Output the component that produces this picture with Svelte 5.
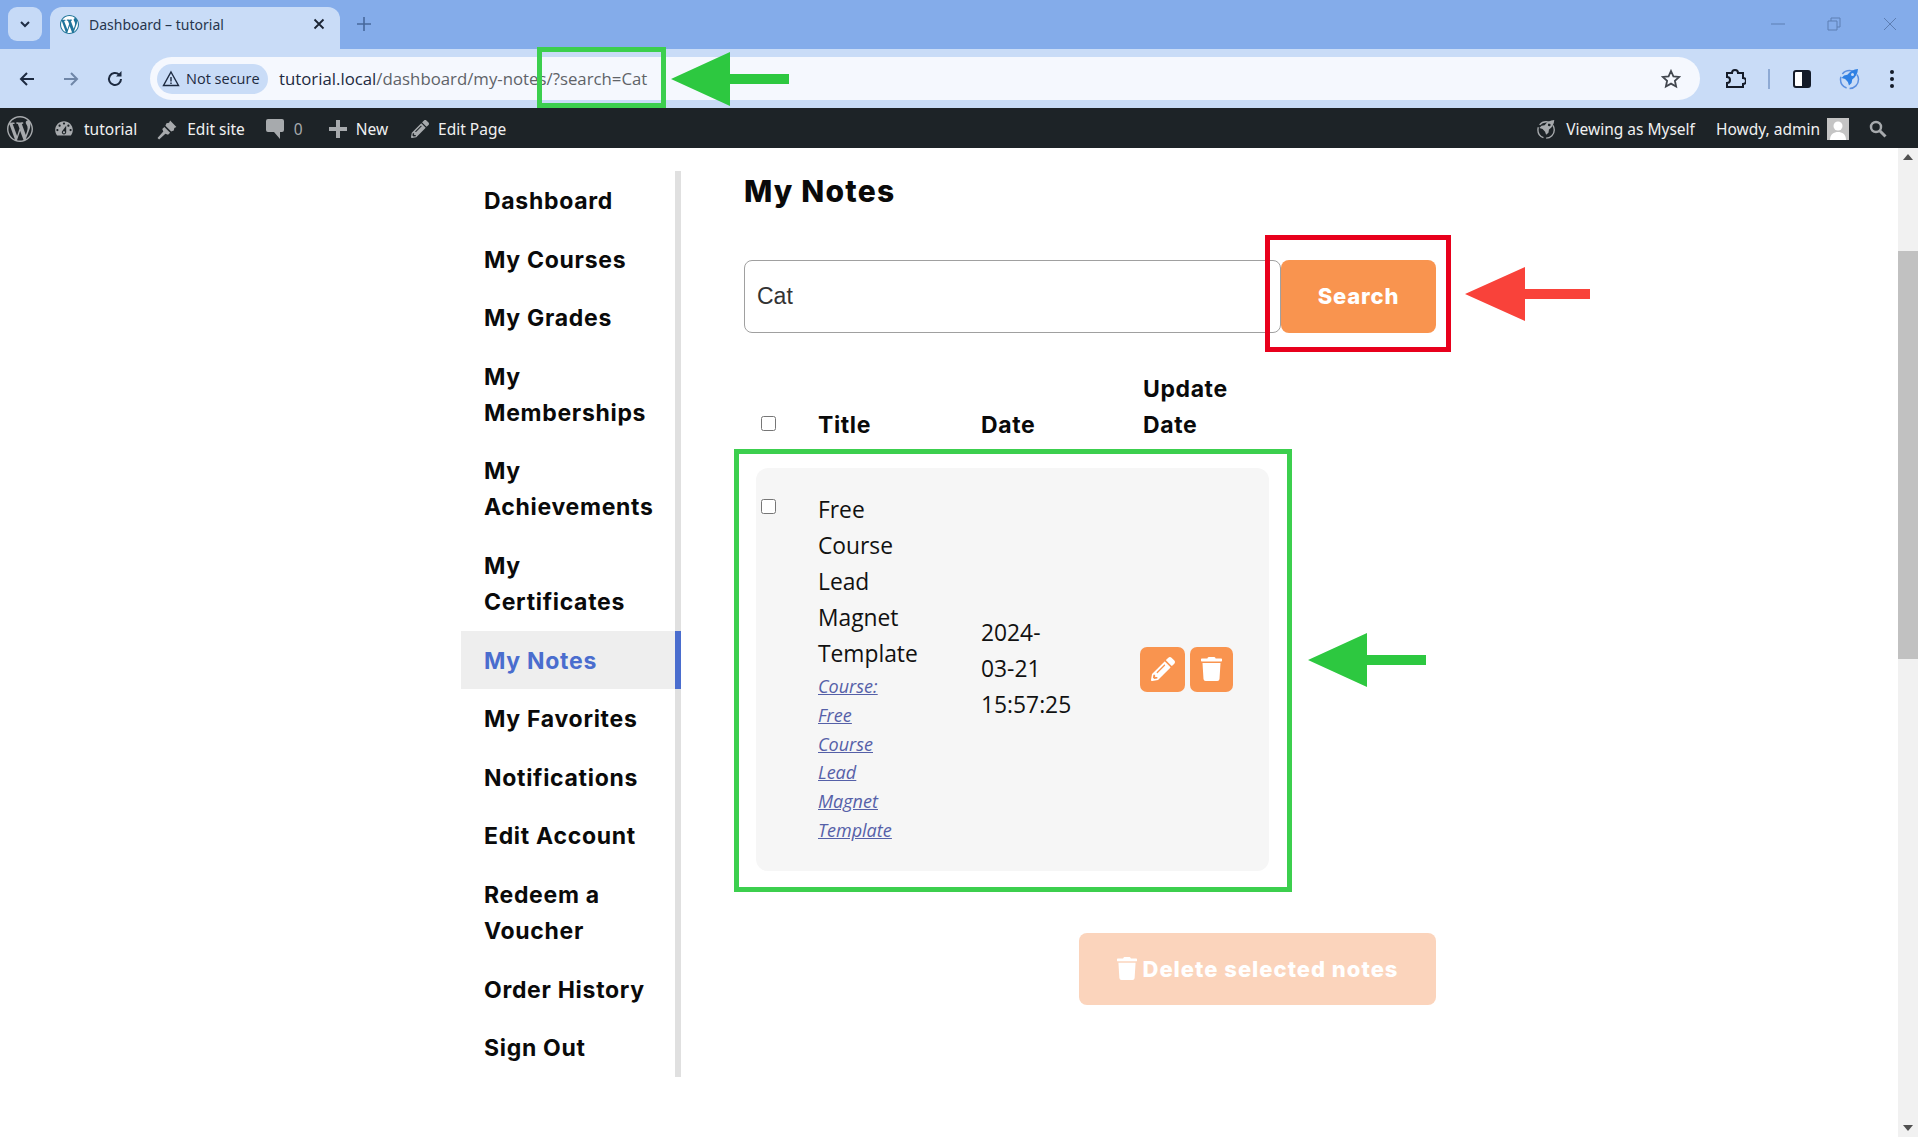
<script>
  const menu = [
    "Dashboard",
    "My Courses",
    "My Grades",
    "My Memberships",
    "My Achievements",
    "My Certificates",
    "My Notes",
    "My Favorites",
    "Notifications",
    "Edit Account",
    "Redeem a Voucher",
    "Order History",
    "Sign Out"
  ];
  const titleLines = ["Free", "Course", "Lead", "Magnet", "Template"];
  const courseLines = ["Course:", "Free", "Course", "Lead", "Magnet", "Template"];

  const trash = "M432 32H312l-9.4-18.7A24 24 0 0 0 281.1 0H166.8a23.72 23.72 0 0 0-21.4 13.3L136 32H16A16 16 0 0 0 0 48v32a16 16 0 0 0 16 16h416a16 16 0 0 0 16-16V48a16 16 0 0 0-16-16zM53.2 467a48 48 0 0 0 47.9 45h245.8a48 48 0 0 0 47.9-45L416 128H32z";
  const pencil = "M497.9 142.1l-46.1 46.1c-4.7 4.7-12.3 4.7-17 0l-111-111c-4.7-4.7-4.7-12.3 0-17l46.1-46.1c18.7-18.7 49.1-18.7 67.9 0l60.1 60.1c18.8 18.7 18.8 49.1 0 67.9zM284.2 99.8L21.6 362.4.4 483.9c-2.9 16.4 11.4 30.6 27.8 27.8l121.5-21.3 262.6-262.6c4.7-4.7 4.7-12.3 0-17l-111-111c-4.8-4.7-12.4-4.7-17.1 0zM124.1 339.9c-5.5-5.5-5.5-14.3 0-19.8l154-154c5.5-5.5 14.3-5.5 19.8 0s5.5 14.3 0 19.8l-154 154c-5.5 5.5-14.3 5.5-19.8 0zM88 424h48v36.3l-64.5 11.3-31.1-31.1L51.7 376H88v48z";
  const wp = "M20 10c0-5.51-4.49-10-10-10C4.48 0 0 4.49 0 10c0 5.52 4.48 10 10 10 5.51 0 10-4.48 10-10zM7.78 15.37L4.37 6.22c.55-.02 1.17-.08 1.17-.08.5-.06.44-1.13-.06-1.11 0 0-1.45.11-2.37.11-.18 0-.37 0-.58-.01C4.12 2.69 6.87 1.11 10 1.11c2.33 0 4.45.87 6.05 2.34-.68-.11-1.65.39-1.65 1.58 0 .74.45 1.36.9 2.1.35.61.55 1.36.55 2.46 0 1.49-1.4 5-1.4 5l-3.03-8.37c.54-.02.82-.17.82-.17.5-.05.44-1.25-.06-1.22 0 0-1.44.12-2.37.12-.87 0-2.33-.12-2.33-.12-.5-.03-.56 1.2-.06 1.22l.92.08 1.26 3.41zM17.41 10c.24-.64.74-1.87.43-4.25.7 1.29 1.05 2.71 1.05 4.25 0 3.29-1.73 6.24-4.4 7.78.97-2.59 1.94-5.2 2.92-7.78zM6.1 18.09C3.12 16.65 1.11 13.53 1.11 10c0-1.3.23-2.48.72-3.59C3.25 10.3 4.67 14.2 6.1 18.09zm4.03-6.63l2.58 6.98c-.86.29-1.76.45-2.71.45-.79 0-1.57-.11-2.29-.33.81-2.38 1.62-4.74 2.42-7.1z";
  const gauge = "M3.76 16h12.48c1.1-1.37 1.76-3.11 1.76-5 0-4.42-3.58-8-8-8s-8 3.58-8 8c0 1.89.66 3.63 1.76 5zM10 4c.55 0 1 .45 1 1s-.45 1-1 1-1-.45-1-1 .45-1 1-1zM6 6c.55 0 1 .45 1 1s-.45 1-1 1-1-.45-1-1 .45-1 1-1zm8 0c.55 0 1 .45 1 1s-.45 1-1 1-1-.45-1-1 .45-1 1-1zm-5.37 5.55L12 7v6c0 1.1-.9 2-2 2s-2-.9-2-2c0-.57.24-1.08.63-1.45zM4 10c.55 0 1 .45 1 1s-.45 1-1 1-1-.45-1-1 .45-1 1-1zm12 0c.55 0 1 .45 1 1s-.45 1-1 1-1-.45-1-1 .45-1 1-1zm-5 3c0-.55-.45-1-1-1s-1 .45-1 1 .45 1 1 1 1-.45 1-1z";
  const rocket = "M19 1c-4.5.3-8 2.2-10.6 5.8L5 7.4 2.6 10l3.5 1.1 2.8 2.8L10 17.4l2.6-2.4.6-3.4C16.800 9 18.700 5.500 19 1zM13.500 5a1.500 1.500 0 1 1 0 3 1.500 1.500 0 0 1 0-3z";
  const brush = "M12.500 1.500L18.500 7.500L16.500 8.500L16 11L13.500 12L8 6.500L9 4L11.500 3.500ZM7 7.500L12.500 13L10.500 15L8 14L2 19.500L.5 18L6 12L5 9.500Z";
</script>

<div class="window">
  <div class="tabstrip">
    <div class="tablist-btn">
      <svg width="14" height="14" viewBox="0 0 14 14"><path d="M3 5l4 4 4-4" fill="none" stroke="#1f2d45" stroke-width="2"/></svg>
    </div>
    <div class="tab">
      <svg class="favicon" width="19" height="19" viewBox="0 0 20 20"><circle cx="10" cy="10" r="10" fill="#fff"/><path d={wp} fill="#21759b"/></svg>
      <span class="tab-title">Dashboard – tutorial</span>
      <svg class="tab-close" width="12" height="12" viewBox="0 0 12 12"><path d="M1.500 1.500l9 9M10.500 1.500l-9 9" stroke="#1b2433" stroke-width="1.800"/></svg>
    </div>
    <svg class="newtab" width="14" height="14" viewBox="0 0 14 14"><path d="M7 0v14M0 7h14" stroke="#47689c" stroke-width="1.600"/></svg>
    <div class="winctl">
      <svg width="14" height="14" viewBox="0 0 14 14"><path d="M0 7h14" stroke="#5d7eb3" stroke-width="1"/></svg>
      <svg width="14" height="14" viewBox="0 0 14 14"><path d="M1 4h9v9H1zM4 4V1h9v9h-3" fill="none" stroke="#5d7eb3" stroke-width="1"/></svg>
      <svg width="14" height="14" viewBox="0 0 14 14"><path d="M1 1l12 12M13 1L1 13" stroke="#5d7eb3" stroke-width="1"/></svg>
    </div>
  </div>

  <div class="toolbar">
    <svg class="nav-icon" width="18" height="18" viewBox="0 0 18 18"><path d="M16 9H3M9 3L3 9l6 6" fill="none" stroke="#1d2a40" stroke-width="2"/></svg>
    <svg class="nav-icon" width="18" height="18" viewBox="0 0 18 18"><path d="M2 9h13M9 3l6 6-6 6" fill="none" stroke="#6f86a8" stroke-width="2"/></svg>
    <svg class="nav-icon" width="18" height="18" viewBox="0 0 18 18"><path d="M15 9a6 6 0 1 1-1.800-4.300" fill="none" stroke="#1d2a40" stroke-width="2"/><path d="M15.500 1v5.500H10z" fill="#1d2a40"/></svg>
    <div class="omnibox">
      <div class="chip">
        <svg width="18" height="17" viewBox="0 0 18 17"><path d="M9 2l7.500 13.500h-15zM9 7v4.500M9 12.500v1.500" fill="none" stroke="#1d2a40" stroke-width="1.400"/></svg>
        <span>Not secure</span>
      </div>
      <div class="url"><span class="host">tutorial.local</span>/dashboard/my-notes/?search=Cat</div>
      <svg class="star" width="20" height="20" viewBox="0 0 20 20"><path d="M10 2l2.400 5.300 5.800.6-4.300 3.900 1.200 5.700-5.100-2.900-5.100 2.900 1.200-5.700L1.800 7.900l5.800-.6z" fill="none" stroke="#42474f" stroke-width="1.800"/></svg>
    </div>
    <div class="tools">
      <svg width="22" height="22" viewBox="0 0 22 22"><path d="M3 5h5a3 3 0 0 1 6 0h5v5a3 3 0 0 1 0 6v3H3v-4a3 3 0 0 0 0-6z" fill="none" stroke="#141b28" stroke-width="2"/></svg>
      <span class="tool-sep"></span>
      <svg width="20" height="20" viewBox="0 0 20 20"><rect x="2" y="2" width="16" height="16" rx="2" fill="#fff" stroke="#141b28" stroke-width="2"/><rect x="10" y="2" width="8" height="16" fill="#141b28"/></svg>
      <svg class="tool-rocket" width="22" height="22" viewBox="0 0 22 22"><circle cx="10.500" cy="11.500" r="9" fill="none" stroke="#5b8fe0" stroke-width="1.500" stroke-dasharray="14 3"/><path d={rocket} fill="#2f80e4"/></svg>
      <svg class="tool-dots" width="6" height="20" viewBox="0 0 6 20"><circle cx="3" cy="3" r="2" fill="#141b28"/><circle cx="3" cy="10" r="2" fill="#141b28"/><circle cx="3" cy="17" r="2" fill="#141b28"/></svg>
    </div>
  </div>

  <div class="adminbar">
    <div class="ab-group">
      <svg class="ab-wp" width="26" height="26" viewBox="0 0 20 20"><path d={wp} fill="#a7aaad"/></svg>
      <div class="ab-item"><svg width="22" height="22" viewBox="0 0 20 20"><path d={gauge} fill="#a7aaad"/></svg>tutorial</div>
      <div class="ab-item"><svg width="21" height="21" viewBox="0 0 20 20"><path d={brush} fill="#a7aaad"/></svg>Edit site</div>
      <div class="ab-item"><svg width="20" height="22" viewBox="0 0 20 22"><path d="M3 1h14a2 2 0 0 1 2 2v9a2 2 0 0 1-2 2h-2v7l-6-7H3a2 2 0 0 1-2-2V3a2 2 0 0 1 2-2z" fill="#a7aaad"/></svg><span class="dim">0</span></div>
      <div class="ab-item ab-new"><svg width="18" height="18" viewBox="0 0 18 18"><path d="M7 0h4v7h7v4h-7v7H7v-7H0V7h7z" fill="#a7aaad"/></svg>New</div>
      <div class="ab-item ab-editpage"><svg width="18" height="18" viewBox="0 0 512 512"><path d={pencil} fill="#a7aaad"/></svg>Edit Page</div>
    </div>
    <div class="ab-group ab-right">
      <div class="ab-item"><svg width="20" height="20" viewBox="0 0 22 22"><circle cx="10" cy="12" r="9" fill="none" stroke="#a7aaad" stroke-width="1.500" stroke-dasharray="14 3"/><path d={rocket} fill="#a7aaad"/></svg>Viewing as Myself</div>
      <div class="ab-item">Howdy, admin
        <span class="avatar"><svg width="22" height="22" viewBox="0 0 22 22"><rect width="22" height="22" fill="#c4c4c4"/><circle cx="11" cy="8" r="4.500" fill="#fff"/><path d="M3 22c0-6 4-8 8-8s8 2 8 8z" fill="#fff"/></svg></span>
      </div>
      <svg class="ab-search" width="18" height="18" viewBox="0 0 18 18"><circle cx="7" cy="7" r="5" fill="none" stroke="#a7aaad" stroke-width="2.500"/><path d="M11 11l5.500 5.500" stroke="#a7aaad" stroke-width="3"/></svg>
    </div>
  </div>

  <div class="viewport">
    <div class="page">
      <nav class="sidebar">
        {#each menu as item}
          <div class="menu-item" class:active={item === "My Notes"}>{item}</div>
        {/each}
      </nav>

      <main class="content">
        <h1>My Notes</h1>
        <div class="searchrow">
          <div class="searchbox">Cat</div>
          <div class="searchbtn">Search</div>
        </div>

        <table class="notes">
          <thead>
            <tr>
              <th class="col-check"><input type="checkbox" /></th>
              <th class="col-title">Title</th>
              <th class="col-date">Date</th>
              <th class="col-update">Update Date</th>
            </tr>
          </thead>
          <tbody>
            <tr>
              <td class="cell-check"><input type="checkbox" /></td>
              <td class="cell-title">
                {#each titleLines as line}<div>{line}</div>{/each}
                <a href="#top">{#each courseLines as line}<span>{line}</span>{/each}</a>
              </td>
              <td class="cell-date">2024-<br />03-21<br />15:57:25</td>
              <td class="cell-actions">
                <div class="actions">
                  <span class="act act-edit"><svg width="24" height="24" viewBox="0 0 512 512"><path d={pencil} fill="#fff"/></svg></span>
                  <span class="act act-del"><svg width="21" height="24" viewBox="0 0 448 512"><path d={trash} fill="#fff"/></svg></span>
                </div>
              </td>
            </tr>
          </tbody>
        </table>

        <div class="bulk">
          <div class="bulkbtn">
            <svg width="20" height="23" viewBox="0 0 448 512"><path d={trash} fill="#fff"/></svg>
            Delete selected notes
          </div>
        </div>
      </main>
    </div>

    <div class="scrollbar">
      <svg class="sb-arrow" width="20" height="18" viewBox="0 0 20 18"><path d="M10 6l5 6H5z" fill="#505050"/></svg>
      <div class="sb-track"><div class="sb-thumb"></div></div>
      <svg class="sb-arrow" width="20" height="18" viewBox="0 0 20 18"><path d="M10 12l5-6H5z" fill="#505050"/></svg>
    </div>
  </div>

  <!-- annotations drawn on top of the screenshot -->
  <div class="mark mark-url"></div>
  <div class="mark mark-search"></div>
  <div class="mark mark-row"></div>
  <svg class="arrow arrow-url" width="118" height="54" viewBox="0 0 118 54"><path d="M0 27L59 0v22h59v10H59v22z" fill="#2dc840"/></svg>
  <svg class="arrow arrow-search" width="125" height="54" viewBox="0 0 125 54"><path d="M0 27L60 0v22h65v10H60v22z" fill="#f9423a"/></svg>
  <svg class="arrow arrow-row" width="118" height="54" viewBox="0 0 118 54"><path d="M0 27L59 0v22h59v10H59v22z" fill="#2dc840"/></svg>
</div>

<style>
  :global(body) {
    margin: 0;
    background: #fff;
    overflow: hidden;
  }

  .window {
    position: relative;
    width: 1918px;
    height: 1137px;
    display: flex;
    flex-direction: column;
    overflow: hidden;
    font-family: "Open Sans", "Liberation Sans", sans-serif;
    color: #111;
  }

  /* browser chrome */
  .tabstrip {
    height: 49px;
    flex: none;
    background: #84acea;
    display: flex;
    align-items: flex-end;
    padding-left: 8px;
    position: relative;
  }
  .tablist-btn {
    width: 34px;
    height: 34px;
    margin-bottom: 8px;
    border-radius: 9px;
    background: #c6daf7;
    display: flex;
    align-items: center;
    justify-content: center;
  }
  .tab {
    width: 290px;
    height: 42px;
    margin-left: 8px;
    box-sizing: border-box;
    padding: 0 15px 8px 10px;
    background: #c9dcf7;
    border-radius: 12px 12px 0 0;
    display: flex;
    align-items: center;
    font-size: 14px;
    font-family: "Noto Sans", sans-serif;
    color: #27364d;
  }
  .tab-title {
    margin-left: 10px;
    flex: 1;
  }
  .newtab {
    margin: 0 0 18px 17px;
  }
  .winctl {
    margin-left: auto;
    align-self: flex-start;
    margin-top: 17px;
    display: flex;
    gap: 42px;
    padding-right: 21px;
  }
  .toolbar {
    height: 59px;
    flex: none;
    background: #c9dcf7;
    display: flex;
    align-items: center;
    padding-left: 18px;
  }
  .nav-icon {
    margin-right: 26px;
  }
  .omnibox {
    width: 1550px;
    height: 43px;
    box-sizing: border-box;
    padding: 0 19px 0 7px;
    background: #f5f8fe;
    border-radius: 22px;
    display: flex;
    align-items: center;
  }
  .chip {
    height: 30px;
    width: 111px;
    box-sizing: border-box;
    padding-left: 5px;
    gap: 6px;
    border-radius: 15px;
    background: #c9dcf7;
    display: flex;
    align-items: center;
    font-size: 14.5px;
    color: #1d2a40;
    white-space: nowrap;
  }
  .url {
    margin-left: 11px;
    font-size: 16.8px;
    color: #5f6368;
    flex: 1;
  }
  .host {
    color: #1d2a40;
  }
  .tools {
    display: flex;
    align-items: center;
    margin-left: 24px;
    gap: 22px;
  }
  .tool-sep {
    width: 2px;
    height: 20px;
    background: #8eaad4;
  }
  .tool-rocket {
    margin-left: 5px;
  }
  .tool-dots {
    margin-left: 6px;
  }

  /* wp admin bar */
  .adminbar {
    height: 40px;
    flex: none;
    box-sizing: border-box;
    background: #1d2327;
    display: flex;
    align-items: center;
    justify-content: space-between;
    padding: 2px 31px 0 7px;
    color: #f0f0f1;
    font-size: 15.5px;
    font-family: "Noto Sans", sans-serif;
  }
  .ab-group {
    display: flex;
    align-items: center;
    gap: 20px;
  }
  .ab-right {
    gap: 21px;
  }
  .ab-item {
    display: flex;
    align-items: center;
    gap: 9px;
    white-space: nowrap;
  }
  .ab-new {
    margin-left: 6px;
  }
  .ab-editpage {
    margin-left: 3px;
  }
  .dim {
    color: #a7aaad;
  }
  .avatar {
    display: flex;
    margin-left: -2px;
  }
  .ab-search {
    margin-left: -1px;
  }

  /* page */
  .viewport {
    flex: 1;
    display: flex;
    min-height: 0;
  }
  .page {
    flex: 1;
    display: flex;
    align-items: flex-start;
    padding: 23px 0 0 461px;
  }
  .sidebar {
    width: 220px;
    box-sizing: border-box;
    border-right: 6px solid #e0e0e0;
    font-family: Inter, "Liberation Sans", sans-serif;
    font-weight: 700;
    font-size: 23px;
    letter-spacing: 0.7px;
    line-height: 36px;
    color: #0a0a0a;
  }
  .menu-item {
    padding: 12px 20px 10.6px 23px;
    position: relative;
  }
  .menu-item.active {
    background: #eeeeee;
    color: #4a6dce;
  }
  .menu-item.active::after {
    content: "";
    position: absolute;
    top: 0;
    bottom: 0;
    right: -6px;
    width: 6px;
    background: #4a6dce;
  }
  .content {
    width: 692px;
    margin-left: 63px;
    font-size: 22.8px;
    line-height: 36px;
  }
  h1 {
    margin: 0;
    font-family: Inter, "Liberation Sans", sans-serif;
    font-size: 30px;
    font-weight: 800;
    letter-spacing: 1.2px;
    line-height: 40px;
    color: #0a0a0a;
  }
  .searchrow {
    display: flex;
    margin-top: 49px;
    height: 73px;
  }
  .searchbox {
    width: 537px;
    box-sizing: border-box;
    border: 1px solid #a0a0a0;
    border-radius: 8px;
    padding-left: 12px;
    line-height: 71px;
    font-family: "Liberation Sans", sans-serif;
    font-size: 23px;
    color: #333;
  }
  .searchbtn {
    width: 155px;
    background: #f9944f;
    border-radius: 8px;
    color: #fff;
    font-family: Inter, sans-serif;
    font-weight: 800;
    font-size: 22px;
    letter-spacing: 0.8px;
    line-height: 73px;
    text-align: center;
  }
  .notes {
    border-collapse: collapse;
    table-layout: fixed;
    width: 513px;
    margin: 38px 0 0 12px;
  }
  .notes th {
    box-sizing: border-box;
    font-family: Inter, sans-serif;
    font-weight: 700;
    font-size: 23px;
    letter-spacing: 0.6px;
    line-height: 36px;
    text-align: left;
    vertical-align: bottom;
    padding: 0 18px 25px;
    color: #0a0a0a;
  }
  .col-check {
    width: 44px;
  }
  .notes th.col-check {
    padding: 0 0 37px 5px;
  }
  .col-title {
    width: 163px;
  }
  .col-date {
    width: 162px;
  }
  .notes th.col-update {
    padding-right: 0;
  }
  input[type="checkbox"] {
    width: 15px;
    height: 15px;
    margin: 0;
    display: block;
  }
  tbody tr {
    background: #f6f6f6;
  }
  tbody td {
    padding: 24px 18px 26px;
    vertical-align: middle;
    box-sizing: border-box;
  }
  td.cell-check {
    vertical-align: top;
    padding: 31px 0 0 5px;
    border-radius: 12px 0 0 12px;
  }
  td.cell-date {
    padding: 25px 18px;
  }
  a {
    display: block;
    font-style: italic;
    font-size: 18px;
    line-height: 28.800px;
    color: #5560a8;
  }
  a span {
    display: block;
    text-decoration: underline;
  }
  td.cell-actions {
    padding: 0;
    border-radius: 0 12px 12px 0;
  }
  .actions {
    display: flex;
    gap: 5px;
    margin-left: 15px;
  }
  .act {
    height: 45px;
    background: #f9944f;
    border-radius: 7px;
    display: flex;
    align-items: center;
    justify-content: center;
  }
  .act-edit {
    width: 45px;
  }
  .act-del {
    width: 43px;
  }
  .bulk {
    display: flex;
    justify-content: flex-end;
    margin-top: 62px;
  }
  .bulkbtn {
    width: 357px;
    height: 72px;
    background: #fbd4bc;
    border-radius: 8px;
    color: #fff;
    display: flex;
    align-items: center;
    justify-content: center;
    gap: 6px;
    font-family: Inter, sans-serif;
    font-weight: 800;
    font-size: 22px;
    letter-spacing: 1px;
  }

  /* scrollbar */
  .scrollbar {
    width: 20px;
    flex: none;
    background: #f1f1f1;
    display: flex;
    flex-direction: column;
  }
  .sb-arrow {
    flex: none;
  }
  .sb-track {
    flex: 1;
    padding-top: 85px;
  }
  .sb-thumb {
    height: 408px;
    background: #c1c1c1;
  }

  /* annotations */
  .mark {
    position: absolute;
    box-sizing: border-box;
    border: 5px solid #3ccf4e;
  }
  .mark-url {
    left: 537px;
    top: 47px;
    width: 129px;
    height: 61px;
  }
  .mark-search {
    left: 1265px;
    top: 235px;
    width: 186px;
    height: 117px;
    border-color: #e8001c;
  }
  .mark-row {
    left: 734px;
    top: 449px;
    width: 558px;
    height: 443px;
  }
  .arrow {
    position: absolute;
  }
  .arrow-url {
    left: 671px;
    top: 52px;
  }
  .arrow-search {
    left: 1465px;
    top: 267px;
  }
  .arrow-row {
    left: 1308px;
    top: 633px;
  }
</style>
